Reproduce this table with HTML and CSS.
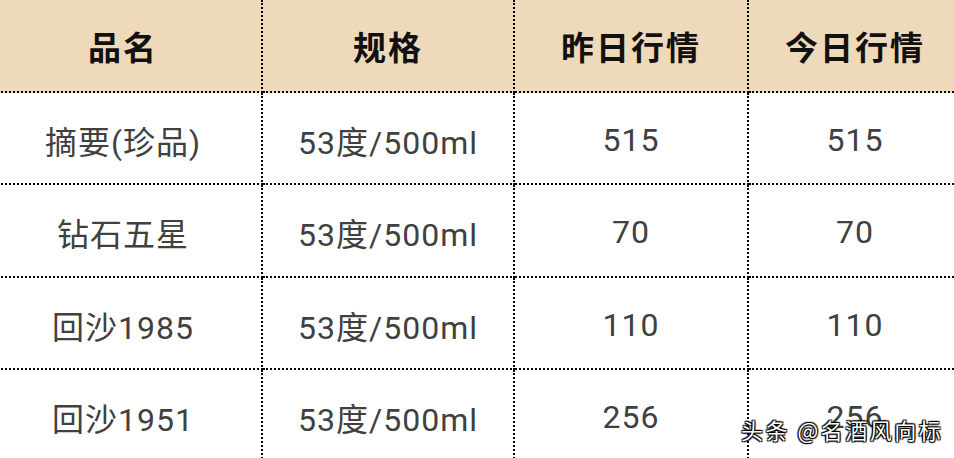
FILE: index.html
```html
<!DOCTYPE html>
<html lang="zh-CN">
<head>
<meta charset="utf-8">
<link rel="stylesheet" href="styles.css">
</head>
<body>
<div class="page">
  <div class="table">
    <div class="cell head">品名</div>
    <div class="cell head">规格</div>
    <div class="cell head">昨日行情</div>
    <div class="cell head last">今日行情</div>

    <div class="cell">摘要(珍品)</div>
    <div class="cell">53度/500ml</div>
    <div class="cell">515</div>
    <div class="cell last">515</div>

    <div class="cell">钻石五星</div>
    <div class="cell">53度/500ml</div>
    <div class="cell">70</div>
    <div class="cell last">70</div>

    <div class="cell">回沙1985</div>
    <div class="cell">53度/500ml</div>
    <div class="cell">110</div>
    <div class="cell last">110</div>

    <div class="cell">回沙1951</div>
    <div class="cell">53度/500ml</div>
    <div class="cell">256</div>
    <div class="cell last">256</div>
  </div>
  <div class="watermark">头条 @名酒风向标</div>
</div>
</body>
</html>
```

FILE: styles.css
```css
html, body {
  margin: 0;
  padding: 0;
  background: #ffffff;
}

.page {
  position: relative;
  width: 954px;
  height: 458px;
  overflow: hidden;
  font-family: Roboto, "Noto Sans CJK SC", sans-serif;
}

.table {
  display: grid;
  grid-template-columns: 278px 252px 234px 212px;
  grid-template-rows: 93px 92px 93px 92px 92px;
  margin-left: -15px;
}

.cell {
  display: flex;
  align-items: center;
  justify-content: center;
  padding-top: 3px;
  border-right: 2px dotted #000;
  border-bottom: 2px dotted #000;
  font-size: 32px;
  color: #404040;
  letter-spacing: 1px;
  white-space: nowrap;
}

.cell.last {
  border-right: none;
}

.head {
  padding-top: 0;
  background: #eedaba;
  font-family: "Noto Sans CJK SC", sans-serif;
  font-weight: 700;
  font-size: 33px;
  color: #111;
  letter-spacing: 2px;
}

.watermark {
  position: absolute;
  left: 741px;
  top: 413px;
  font-family: "Noto Sans CJK SC", sans-serif;
  font-size: 22px;
  letter-spacing: 2.5px;
  color: #fff;
  text-shadow: 0 0 1px #000, 1px 1px 1px #000, -1px -1px 1px #000, 1px -1px 1px #000, -1px 1px 1px #000;
  white-space: nowrap;
}
```
